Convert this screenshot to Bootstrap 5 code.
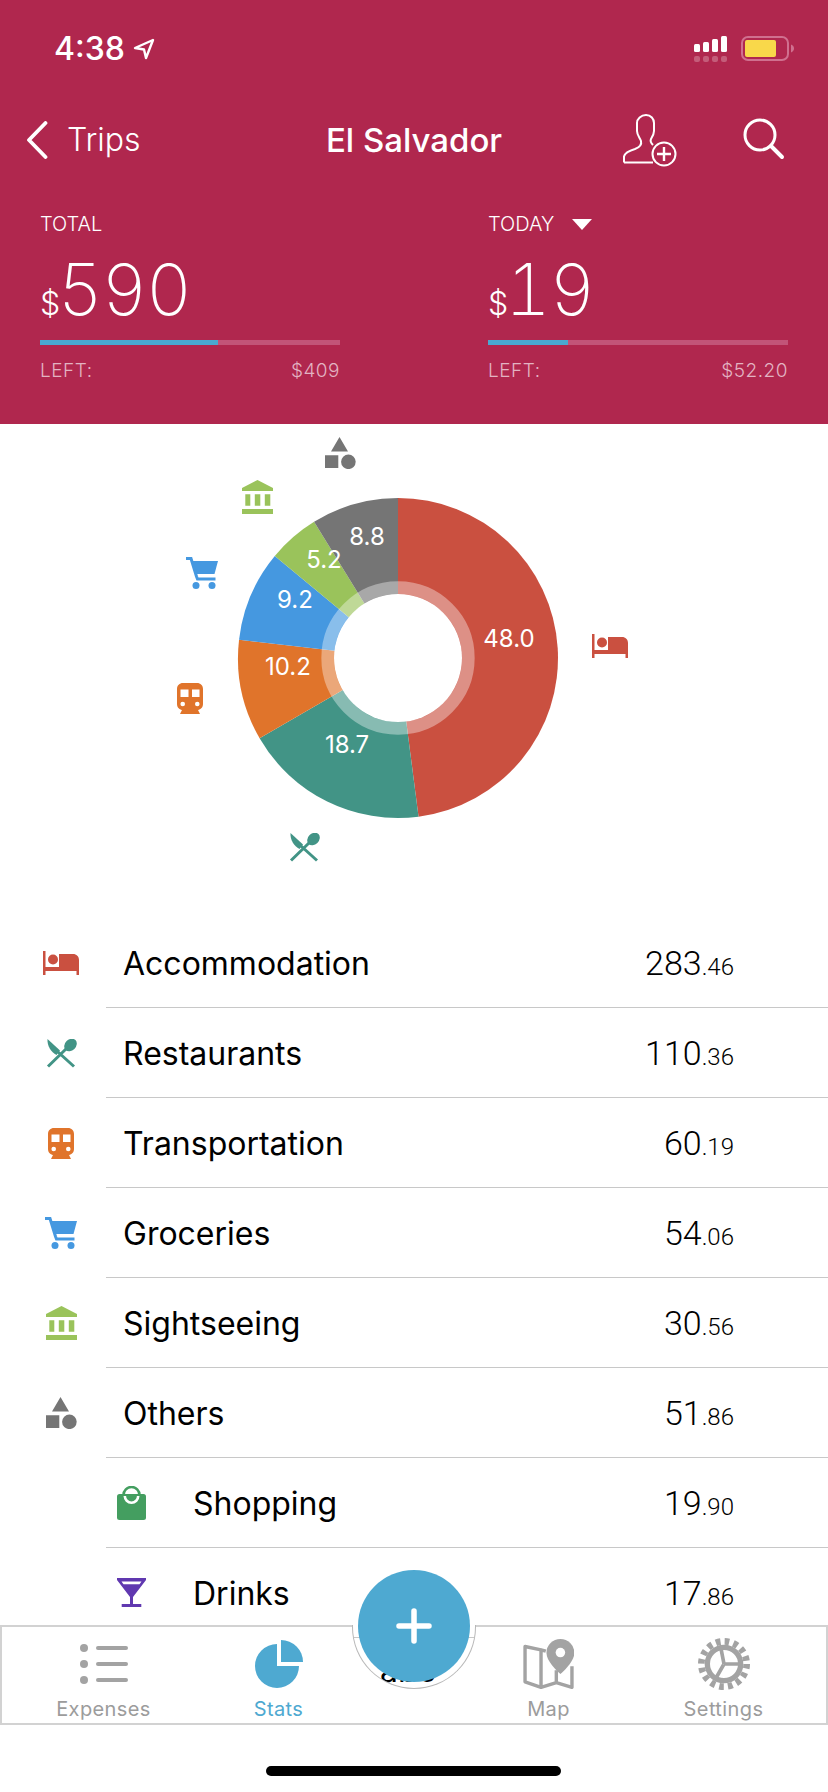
<!DOCTYPE html>
<html lang="en">
<head>
  <meta charset="UTF-8" />
  <meta name="viewport" content="width=device-width, initial-scale=1.0"/>
  <title>El Salvador</title>
  <link href="https://cdn.jsdelivr.net/npm/bootstrap@5.3.3/dist/css/bootstrap.min.css" rel="stylesheet">
  <style>
    body { width: 828px; height: 1792px; overflow: hidden; position: relative; background: #fff; font-family: Inter, "Liberation Sans", sans-serif; color: #000; }
    .trip-head { height: 424px; background: #b0274e; color: #fff; }
    .status-line { height: 98px; padding: 0 34px 0 54px; }
    .clock { font-size: 32px; font-weight: 500; line-height: 1; }
    .nav-line { height: 84px; position: relative; padding: 0 43px 0 26px; }
    .back-text { font-size: 32px; font-weight: 300; margin-left: 19px; }
    .trip-title { font-size: 33px; font-weight: 500; position: absolute; left: 0; right: 0; text-align: center; top: 18px; }
    .search-ic { margin-left: 66px; }
    .stat-line { padding: 26px 40px 0; gap: 148px; }
    .stat-box { width: 300px; }
    .stat-cap { font-size: 20px; font-weight: 300; line-height: 32px; }
    .today-arrow { margin-left: 18px; }
    .stat-sum { height: 72px; margin-top: 13px; font-size: 71px; font-weight: 200; line-height: 72px; font-variant-numeric: tabular-nums; letter-spacing: -1.5px; white-space: nowrap; }
    .stat-sum small { font-size: 32px; font-weight: 300; margin-right: -3px; letter-spacing: 0; }
    .stat-bar { height: 5px; background: #c25478; margin-top: 15px; }
    .stat-fill { height: 100%; background: #4aa8d0; }
    .stat-left { font-size: 19px; font-weight: 300; color: #e3b3c2; margin-top: 14px; line-height: 24px; letter-spacing: .5px; }
    .chart-box { display: block; }
    .chart-box text { font-family: Inter, sans-serif; font-size: 24px; fill: #fff; text-anchor: middle; }
    .cat-item { height: 90px; padding: 0; border: 0; color: #000; }
    .cat-ic { width: 106px; padding-left: 16px; }
    .cat-body { border-bottom: 1px solid #c8c8c8; padding-right: 94px; }
    .cat-label { font-size: 32px; margin-left: 17px; padding-top: 2px; }
    .sub-ic { width: 50px; }
    .sub-label { margin-left: 37px; }
    .cat-sum { font-family: Roboto, sans-serif; font-size: 34px; font-weight: 300; padding-top: 2px; }
    .cat-sum small { font-size: 24px; }
    .tab-strip { position: absolute; left: 0; right: 0; top: 1625px; height: 100px; background: #fff; border: 2px solid #d2d2d2; padding: 0 14px; }
    .tab-cell { width: 175px; color: #9c9c9c; font-size: 20px; line-height: 24px; letter-spacing: .4px; }
    .tab-cell.active { color: #4ea9d1; }
    .tab-pic { height: 54px; margin-top: 10px; margin-bottom: 6px; }
    .tab-gap { width: 95px; }
    .notch { position: absolute; left: 352px; top: 1625px; width: 124px; height: 64px; background: #fff; border: 1px solid #b8b8b8; border-top: 0; border-radius: 0 0 62px 62px; overflow: hidden; }
    .notch-rule { position: absolute; left: 0; right: 0; top: 12px; border-top: 1px solid #c8c8c8; }
    .notch-text { position: absolute; left: 0; right: 12px; top: 26px; text-align: center; font-size: 32px; line-height: 40px; }
    .add-btn { position: absolute; left: 358px; top: 1570px; width: 112px; height: 112px; border-radius: 50%; background: #4ea9d1; border: 0; padding: 0; }
    .home-bar { position: absolute; left: 266px; top: 1766px; width: 295px; height: 10px; border-radius: 5px; background: #000; }
  </style>
</head>
<body>
  <svg width="0" height="0" class="position-absolute">
    <symbol id="ic-bed" viewBox="0 0 36 24"><path fill="#ca5040" d="M0 0h2.500v16H16V3h14c3.500 0 6 2.500 6 6v15h-2.500v-4h-31v4H0z"/><circle cx="10" cy="8.500" r="5" fill="#ca5040"/></symbol>
    <symbol id="ic-food" viewBox="0 0 31 29"><g fill="#429486"><path d="M1.500 0 14 11.500l-3.500 4.500C5 13 1 7 1.500 0z"/><ellipse cx="24.500" cy="6" rx="7" ry="5.500" transform="rotate(-45 24.500 6)"/></g><path d="M2 27.500 21 9M28 27.500 12 13" stroke="#429486" stroke-width="3" fill="none"/></symbol>
    <symbol id="ic-train" viewBox="0 0 26 31"><path fill="#e0742b" d="M6 0h14c3.500 0 6 2.500 6 6v15c0 3.500-2.500 6-6 6h1l2 4H3l2-4h1c-3.500 0-6-2.500-6-6V6c0-3.500 2.500-6 6-6z"/><path fill="#fff" d="M3.500 6.500h8v7.500h-8zM15 6.500h7.500v7.500H15z"/><circle cx="5.700" cy="21" r="2.300" fill="#fff"/><circle cx="20.300" cy="21" r="2.300" fill="#fff"/></symbol>
    <symbol id="ic-cart" viewBox="0 0 32 32"><path fill="#4598e0" d="M6 4h26l-3.500 13H10z"/><path d="M0 1.500h5l5.500 18 1 2.500h18" stroke="#4598e0" stroke-width="3" fill="none"/><circle cx="10" cy="28.500" r="3.500" fill="#4598e0"/><circle cx="26" cy="28.500" r="3.500" fill="#4598e0"/></symbol>
    <symbol id="ic-bank" viewBox="0 0 31 34"><path fill="#9ac35b" d="M15.500 0 31 8v3H0V8zM3.300 14.300h5v11.400h-5zM12.800 14.300h5.500v11.400h-5.500zM22.800 14.300h5.500v11.400h-5.500zM0 29h31v5H0z"/></symbol>
    <symbol id="ic-other" viewBox="0 0 31 32"><path fill="#757575" d="M14.500 0 23 14.500H6zM0 18.300h13.300V31H0z"/><circle cx="23.400" cy="24.800" r="7.300" fill="#757575"/></symbol>
    <symbol id="ic-bag" viewBox="0 0 29 34"><rect y="8" width="29" height="26" rx="2.500" fill="#449e60"/><path d="M6.500 9a8 8 0 0 1 16 0" stroke="#449e60" stroke-width="2.600" fill="none"/><path d="M7.800 10a6.700 6.700 0 0 0 13.400 0" stroke="#fff" stroke-width="2.600" fill="none"/></symbol>
    <symbol id="ic-drink" viewBox="0 0 29 29"><path fill="#6038b0" d="M0 0h29v2L16 19v7h8.300v3H4.700v-3H13v-7L0 2z"/><path fill="#fff" d="M4.500 3.500h20l-2 2.700h-16z"/></symbol>
  </svg>

  <header class="trip-head">
    <div class="status-line d-flex align-items-center justify-content-between">
      <div class="d-flex align-items-center gap-2">
        <span class="clock">4:38</span>
        <svg width="22" height="22" viewBox="0 0 22 22"><path d="M20 2 2 10l9 1.500L13 20z" fill="none" stroke="#fff" stroke-width="2.400" stroke-linejoin="round"/></svg>
      </div>
      <svg width="100" height="28" viewBox="694 36 100 28">
        <g fill="#fff"><rect x="694" y="45" width="6" height="8" rx="1.500"/><rect x="703" y="43" width="6" height="10" rx="1.500"/><rect x="712" y="40" width="6" height="13" rx="1.500"/><rect x="721" y="37" width="6" height="16" rx="1.500"/></g>
        <g fill="#fff" fill-opacity=".25"><rect x="694" y="57" width="6" height="6" rx="2"/><rect x="703" y="57" width="6" height="6" rx="2"/><rect x="712" y="57" width="6" height="6" rx="2"/><rect x="721" y="57" width="6" height="6" rx="2"/></g>
        <rect x="742" y="38" width="46" height="23" rx="6" fill="none" stroke="#d0708f" stroke-width="2"/>
        <rect x="745" y="41" width="31" height="17" rx="2" fill="#f9d84a"/>
        <path d="M791 45.500c2 .8 3 2.200 3 4s-1 3.200-3 4z" fill="#d0708f"/>
      </svg>
    </div>
    <nav class="nav-line d-flex align-items-center">
      <svg width="22" height="38" viewBox="0 0 22 38"><path d="M19.500 2 3 19l16.500 17" fill="none" stroke="#fff" stroke-width="3.800" stroke-linecap="round" stroke-linejoin="round"/></svg>
      <span class="back-text">Trips</span>
      <span class="trip-title">El Salvador</span>
      <div class="ms-auto d-flex align-items-center">
        <svg width="56" height="54" viewBox="620 115 56 54"><g transform="translate(600 20)" fill="none" stroke="#fff" stroke-width="2"><path d="M23 144.500v-6c1-4 6-6 11-7.500 4-1.500 7-4 6-8-1-3-4-6-4-10v-8c0-4 4-8 9-8s8 4 8 8v8c0 3-1 5-3 8-1 2 0 4 2 6M23 144.500h29"/><circle cx="63" cy="136" r="11.500"/><path d="M63 129v14M56 136h14" stroke-width="2.400"/></g></svg>
        <svg class="search-ic" width="42" height="46" viewBox="742 118 42 46"><circle cx="759" cy="136" r="15" fill="none" stroke="#fff" stroke-width="3"/><path d="m770 147 11 11" stroke="#fff" stroke-width="4" stroke-linecap="round"/></svg>
      </div>
    </nav>
    <section class="stat-line d-flex">
      <div class="stat-box">
        <div class="stat-cap">TOTAL</div>
        <div class="stat-sum"><small>$</small>590</div>
        <div class="stat-bar"><div class="stat-fill" style="width:59.300%"></div></div>
        <div class="stat-left d-flex justify-content-between"><span>LEFT:</span><span>$409</span></div>
      </div>
      <div class="stat-box">
        <div class="stat-cap d-flex align-items-center">TODAY
          <svg class="today-arrow" width="20" height="12" viewBox="0 0 20 12"><path d="M0 1h20l-10 11z" fill="#fff"/></svg>
        </div>
        <div class="stat-sum"><small>$</small>19</div>
        <div class="stat-bar"><div class="stat-fill" style="width:26.700%"></div></div>
        <div class="stat-left d-flex justify-content-between"><span>LEFT:</span><span>$52.20</span></div>
      </div>
    </section>
  </header>

  <svg class="chart-box" width="828" height="494" viewBox="0 0 828 494">
    <g id="pie"></g>
    <circle cx="398" cy="234" r="70.300" fill="none" stroke="#fff" stroke-opacity=".37" stroke-width="12.700"/>
    <circle cx="398" cy="234" r="64" fill="#fff"/>
    <text x="509" y="223">48.0</text>
    <text x="367" y="121">8.8</text>
    <text x="324" y="144">5.2</text>
    <text x="295" y="184">9.2</text>
    <text x="288" y="251">10.2</text>
    <text x="347" y="329">18.7</text>
    <use href="#ic-other" x="325" y="13" width="31" height="32"/>
    <use href="#ic-bank" x="242" y="56" width="31" height="34"/>
    <use href="#ic-cart" x="186" y="133" width="32" height="32"/>
    <use href="#ic-train" x="177" y="259" width="26" height="31"/>
    <use href="#ic-food" x="289" y="409" width="31" height="29"/>
    <use href="#ic-bed" x="592" y="210" width="36" height="24"/>
  </svg>

  <ul class="list-group list-group-flush">
    <li class="list-group-item cat-item d-flex">
      <div class="cat-ic d-flex align-items-center justify-content-center"><svg width="36" height="24"><use href="#ic-bed"/></svg></div>
      <div class="cat-body flex-grow-1 d-flex align-items-center justify-content-between"><span class="cat-label">Accommodation</span><span class="cat-sum">283<small>.46</small></span></div>
    </li>
    <li class="list-group-item cat-item d-flex">
      <div class="cat-ic d-flex align-items-center justify-content-center"><svg width="31" height="29"><use href="#ic-food"/></svg></div>
      <div class="cat-body flex-grow-1 d-flex align-items-center justify-content-between"><span class="cat-label">Restaurants</span><span class="cat-sum">110<small>.36</small></span></div>
    </li>
    <li class="list-group-item cat-item d-flex">
      <div class="cat-ic d-flex align-items-center justify-content-center"><svg width="26" height="31"><use href="#ic-train"/></svg></div>
      <div class="cat-body flex-grow-1 d-flex align-items-center justify-content-between"><span class="cat-label">Transportation</span><span class="cat-sum">60<small>.19</small></span></div>
    </li>
    <li class="list-group-item cat-item d-flex">
      <div class="cat-ic d-flex align-items-center justify-content-center"><svg width="32" height="32"><use href="#ic-cart"/></svg></div>
      <div class="cat-body flex-grow-1 d-flex align-items-center justify-content-between"><span class="cat-label">Groceries</span><span class="cat-sum">54<small>.06</small></span></div>
    </li>
    <li class="list-group-item cat-item d-flex">
      <div class="cat-ic d-flex align-items-center justify-content-center"><svg width="31" height="34"><use href="#ic-bank"/></svg></div>
      <div class="cat-body flex-grow-1 d-flex align-items-center justify-content-between"><span class="cat-label">Sightseeing</span><span class="cat-sum">30<small>.56</small></span></div>
    </li>
    <li class="list-group-item cat-item d-flex">
      <div class="cat-ic d-flex align-items-center justify-content-center"><svg width="31" height="32"><use href="#ic-other"/></svg></div>
      <div class="cat-body flex-grow-1 d-flex align-items-center justify-content-between"><span class="cat-label">Others</span><span class="cat-sum">51<small>.86</small></span></div>
    </li>
    <li class="list-group-item cat-item d-flex">
      <div class="cat-ic"></div>
      <div class="cat-body flex-grow-1 d-flex align-items-center"><div class="sub-ic d-flex justify-content-center"><svg width="29" height="34"><use href="#ic-bag"/></svg></div><span class="cat-label sub-label">Shopping</span><span class="cat-sum ms-auto">19<small>.90</small></span></div>
    </li>
    <li class="list-group-item cat-item d-flex">
      <div class="cat-ic"></div>
      <div class="cat-body flex-grow-1 d-flex align-items-center"><div class="sub-ic d-flex justify-content-center"><svg width="29" height="29"><use href="#ic-drink"/></svg></div><span class="cat-label sub-label">Drinks</span><span class="cat-sum ms-auto">17<small>.86</small></span></div>
    </li>
  </ul>

  <footer class="tab-strip d-flex">
    <div class="tab-cell d-flex flex-column align-items-center">
      <div class="tab-pic d-flex align-items-center"><svg width="50" height="48" viewBox="78 1640 50 48"><g fill="#a3a3a3"><circle cx="83" cy="1648" r="4"/><circle cx="83" cy="1664" r="4"/><circle cx="83" cy="1680" r="4"/><rect x="95" y="1646" width="32" height="4" rx="2"/><rect x="95" y="1662" width="32" height="4" rx="2"/><rect x="95" y="1678" width="32" height="4" rx="2"/></g></svg></div>
      <span>Expenses</span>
    </div>
    <div class="tab-cell active d-flex flex-column align-items-center">
      <div class="tab-pic d-flex align-items-center"><svg width="50" height="50" viewBox="254 1639 50 50"><g fill="#4ea9d1"><path d="M277 1644a22 22 0 1 0 22 22h-22z"/><path d="M281 1640a22 22 0 0 1 22 22h-22z"/></g></svg></div>
      <span>Stats</span>
    </div>
    <div class="tab-gap"></div>
    <div class="tab-cell d-flex flex-column align-items-center">
      <div class="tab-pic d-flex align-items-center"><svg width="51" height="51" viewBox="42 40 150 150"><g fill="none" stroke="#a3a3a3" stroke-width="10" stroke-linejoin="round"><path d="M48 62 95 72v110l-47-16zM95 182l45-14 46 14v-62M140 168v-36M95 72l14 4"/></g><path fill="#a3a3a3" d="M152 40a41 41 0 0 1 41 41c0 24-30 52-41 62-11-10-41-38-41-62a41 41 0 0 1 41-41z"/><circle cx="152" cy="80" r="14" fill="#fff"/></svg></div>
      <span>Map</span>
    </div>
    <div class="tab-cell d-flex flex-column align-items-center">
      <div class="tab-pic d-flex align-items-center"><svg width="54" height="54" viewBox="-81 -81 162 162"><g fill="none" stroke="#a3a3a3"><circle r="68" stroke-width="20" stroke-dasharray="14 12.700"/><circle r="50" stroke-width="16"/><path stroke-width="11" d="M0 0-9-46M0 0 46 0M0 0-24 42"/></g></svg></div>
      <span>Settings</span>
    </div>
  </footer>
  <div class="notch"><div class="notch-rule"></div><div class="notch-text">abc</div></div>
  <button class="add-btn btn" type="button" aria-label="Add"><svg width="36" height="36" viewBox="0 0 36 36"><path d="M18 3v30M3 18h30" stroke="#fff" stroke-width="5.500" stroke-linecap="round"/></svg></button>
  <div class="home-bar"></div>

  <script>
    // donut slices, clockwise from 12 o'clock
    const slices = [[48.0, "#ca5040"], [18.7, "#429486"], [10.2, "#e0742b"], [9.2, "#4598e0"], [5.2, "#9ac35b"], [8.8, "#757575"]];
    const total = slices.reduce((s, x) => s + x[0], 0);
    let from = 0;
    let html = "";
    slices.forEach(([val, color]) => {
      const to = from + val / total * Math.PI * 2;
      const x1 = 398 + 160 * Math.sin(from), y1 = 234 - 160 * Math.cos(from);
      const x2 = 398 + 160 * Math.sin(to), y2 = 234 - 160 * Math.cos(to);
      html += `<path fill="${color}" d="M398 234L${x1} ${y1}A160 160 0 ${to - from > Math.PI ? 1 : 0} 1 ${x2} ${y2}Z"/>`;
      from = to;
    });
    document.getElementById("pie").innerHTML = html;
  </script>
  <script src="https://cdn.jsdelivr.net/npm/bootstrap@5.3.3/dist/js/bootstrap.bundle.min.js"></script>
</body>
</html>
